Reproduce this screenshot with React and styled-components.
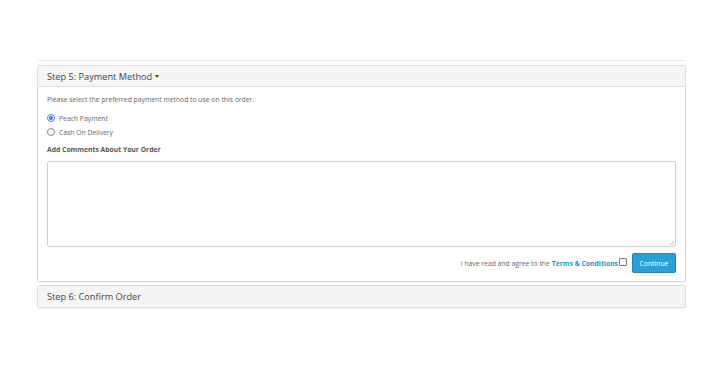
import React, { useState } from 'react';
import styled, { createGlobalStyle } from 'styled-components';

const GlobalStyle = createGlobalStyle`
  body {
    margin: 0;
    background: #ffffff;
    font-family: 'Open Sans', 'Noto Sans', sans-serif;
    color: #666666;
  }
`;

const Page = styled.div`
  padding: 58px 24px 0 37px;
  width: 649px;
`;

const PrevEdge = styled.div`
  height: 2px;
  border-bottom: 1px solid #e6e6e6;
  margin: 0 1px 4px 1px;
`;

const Panel = styled.div`
  border: 1px solid #dddddd;
  border-radius: 2px;
  background: #ffffff;
  margin-bottom: 3px;
  box-shadow: 0 1px 1px rgba(0, 0, 0, 0.04);
`;

const Heading = styled.div`
  background: #f5f5f5;
  border-bottom: ${({ open }) => (open ? '1px solid #dddddd' : 'none')};
  height: ${({ open }) => (open ? '20px' : '21px')};
  padding: 0 9px;
  display: flex;
  align-items: center;
  font-size: 9.2px;
  color: #444444;
`;

const Caret = styled.span`
  display: inline-block;
  width: 0;
  height: 0;
  margin-left: 3px;
  border-left: 2.5px solid transparent;
  border-right: 2.5px solid transparent;
  border-top: 3px solid #444444;
`;

const Body = styled.div`
  padding: 8px 9px 8px 9px;
  font-size: 6.8px;
`;

const Intro = styled.p`
  margin: 0 0 7px 0;
`;

const RadioRow = styled.label`
  display: flex;
  align-items: center;
  height: 14px;
  gap: 4px;
`;

const Radio = styled.span`
  width: 6px;
  height: 6px;
  border-radius: 50%;
  border: 1px solid ${({ checked }) => (checked ? '#3b7fe0' : '#888888')};
  display: flex;
  align-items: center;
  justify-content: center;
  &::after {
    content: '';
    width: 4px;
    height: 4px;
    border-radius: 50%;
    background: ${({ checked }) => (checked ? '#3b7fe0' : 'transparent')};
  }
`;

const Label = styled.div`
  font-weight: 700;
  color: #555555;
  margin: 6px 0 7px 0;
`;

const Comments = styled.div`
  height: 84px;
  border: 1px solid #cccccc;
  border-radius: 2px;
  position: relative;
`;

const Grip = styled.svg`
  position: absolute;
  right: 1px;
  bottom: 1px;
`;

const Footer = styled.div`
  display: flex;
  justify-content: flex-end;
  align-items: center;
  margin-top: 6px;
  gap: 5px;
`;

const Agree = styled.span`
  display: flex;
  align-items: center;
`;

const Terms = styled.b`
  color: #2c8fc7;
  margin-left: 2px;
`;

const Check = styled.span`
  width: 6px;
  height: 6px;
  border: 1px solid #777777;
  border-radius: 1px;
  margin-left: 1px;
  margin-top: -3px;
`;

const Button = styled.button`
  width: 44px;
  height: 20px;
  border: 1px solid #1f84b8;
  border-radius: 2px;
  background: #2a9fd6;
  color: #ffffff;
  font-family: inherit;
  font-size: 6.8px;
  padding: 0;
`;

export default function App() {
  const [method] = useState('peach');
  return (
    <>
      <GlobalStyle />
      <Page>
        <PrevEdge />
        <Panel>
          <Heading open>
            Step 5: Payment Method <Caret />
          </Heading>
          <Body>
            <Intro>Please select the preferred payment method to use on this order.</Intro>
            <RadioRow>
              <Radio checked={method === 'peach'} /> Peach Payment
            </RadioRow>
            <RadioRow>
              <Radio checked={method === 'cod'} /> Cash On Delivery
            </RadioRow>
            <Label>Add Comments About Your Order</Label>
            <Comments>
              <Grip width="5" height="5" viewBox="0 0 5 5">
                <path d="M5 1 L1 5 M5 3 L3 5" stroke="#999" strokeWidth="0.6" />
              </Grip>
            </Comments>
            <Footer>
              <Agree>
                I have read and agree to the <Terms>Terms &amp; Conditions</Terms>
                <Check />
              </Agree>
              <Button>Continue</Button>
            </Footer>
          </Body>
        </Panel>
        <Panel>
          <Heading>Step 6: Confirm Order</Heading>
        </Panel>
      </Page>
    </>
  );
}
